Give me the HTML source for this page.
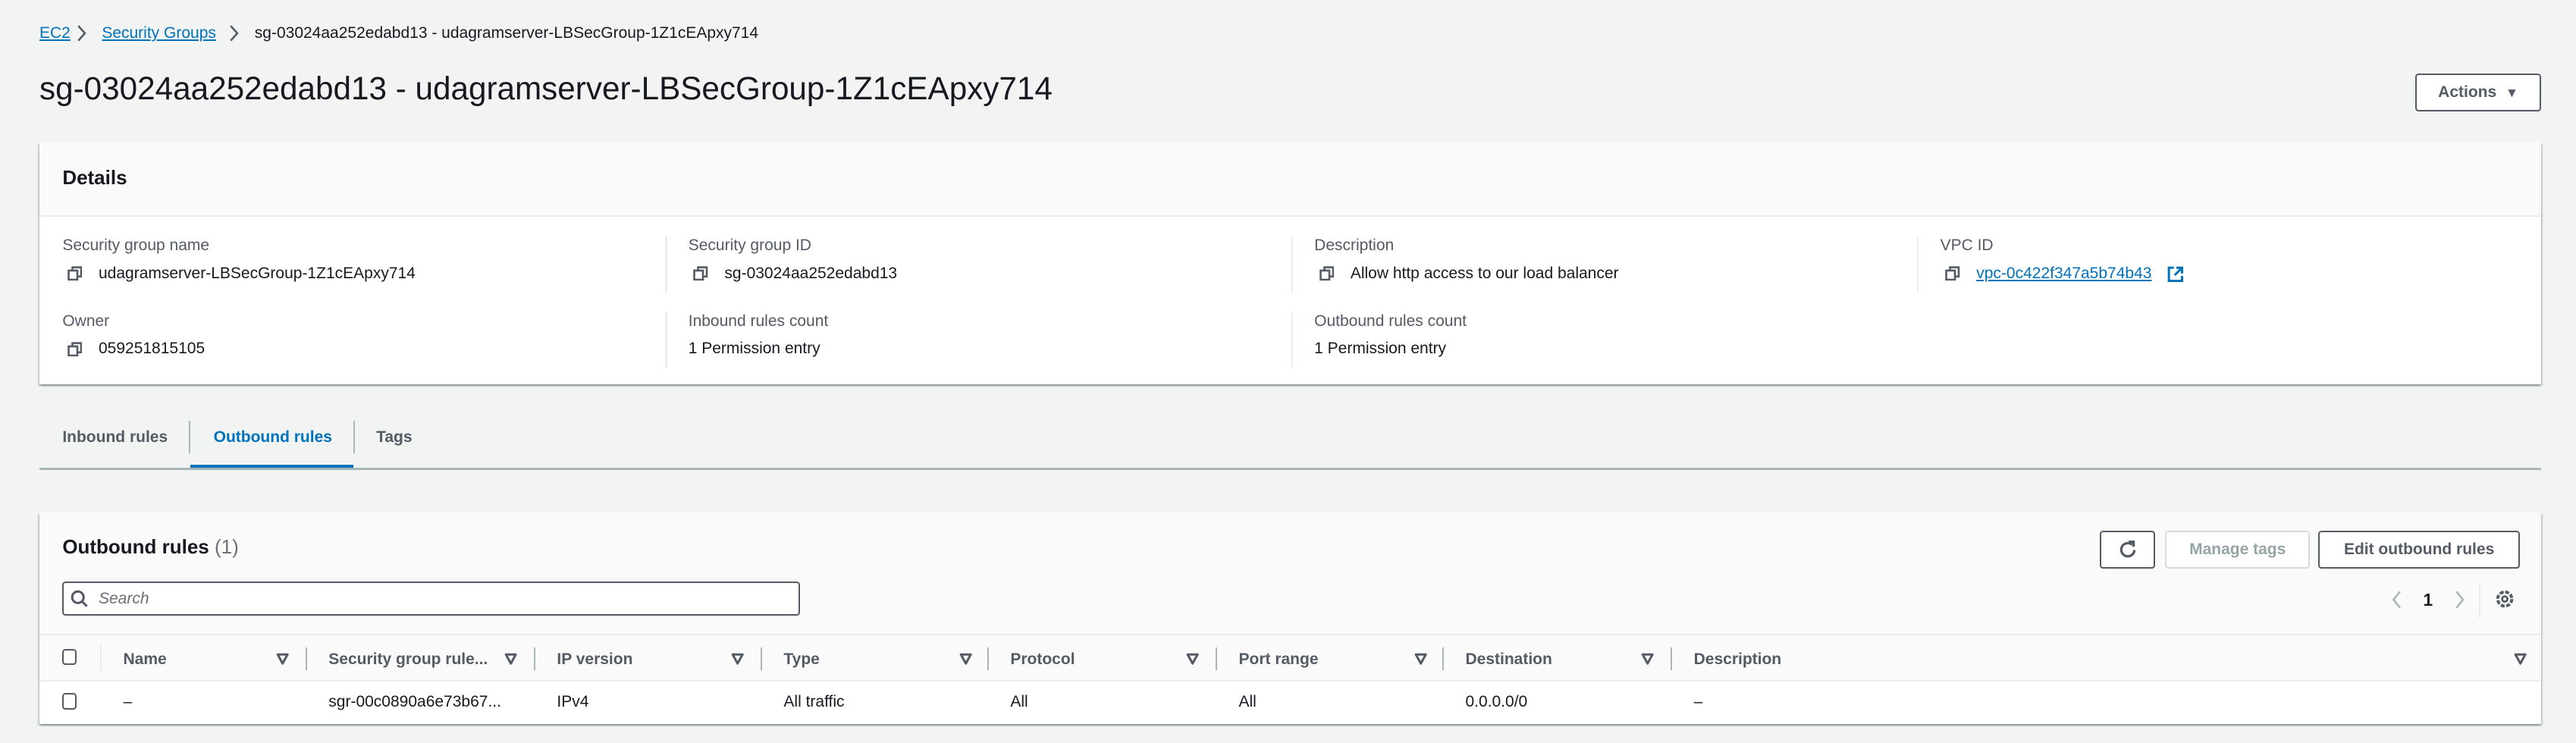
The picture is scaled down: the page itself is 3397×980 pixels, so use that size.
<!DOCTYPE html>
<html><head><meta charset="utf-8">
<style>
html,body{margin:0;padding:0;background:#f2f3f3;overflow:hidden}
body{width:3397px;height:980px}
#w{position:relative;width:1568px;height:452px;zoom:2.16645;font-family:"Liberation Sans",Arial,sans-serif;color:#16191f;font-size:9.7px}
.a{position:absolute;white-space:nowrap}
.lbl{color:#545b64}
.lnk{color:#0073bb;text-decoration:underline}
.box{position:absolute;background:#fff;box-shadow:0 1px 1px rgba(0,28,36,.3),1px 1px 1px rgba(0,28,36,.15),-1px 1px 1px rgba(0,28,36,.15)}
.btn{position:absolute;border:1px solid #545b64;border-radius:2px;background:#fff;font-weight:bold;color:#545b64;display:flex;align-items:center;justify-content:center;box-sizing:border-box}
.vs{position:absolute;width:1px;background:#eaeded}
.th{position:absolute;top:396px;font-weight:bold;color:#545b64}
.tri{position:absolute;top:397px;width:8px;height:8px}
.cs{position:absolute;top:394px;width:1px;height:14px;background:#aab7b8}
.td{position:absolute;top:422px}
.cb{position:absolute;width:7px;height:8px;border:1.3px solid #545b64;border-radius:2px;background:#fff}
.cp{position:absolute;width:9px;height:9px}
</style></head><body><div id="w">
<div class="a lnk" style="left:24px;top:15px">EC2</div>
<svg class="a" style="left:46px;top:15px" width="7" height="11"><path d="M1.5 1l4 4.5-4 4.5" fill="none" stroke="#545b64" stroke-width="1.2"/></svg>
<div class="a lnk" style="left:62px;top:15px">Security Groups</div>
<svg class="a" style="left:139px;top:15px" width="7" height="11"><path d="M1.5 1l4 4.5-4 4.5" fill="none" stroke="#545b64" stroke-width="1.2"/></svg>
<div class="a" style="left:155px;top:15px;color:#16191f">sg-03024aa252edabd13 - udagramserver-LBSecGroup-1Z1cEApxy714</div>
<div class="a" style="left:24px;top:43px;font-size:19.5px">sg-03024aa252edabd13 - udagramserver-LBSecGroup-1Z1cEApxy714</div>
<div class="btn" style="left:1470px;top:45px;width:77px;height:23px">Actions&nbsp;&nbsp;<span style="font-size:8px;color:#545b64">&#9660;</span></div>

<div class="box" style="left:24px;top:87px;width:1523px;height:147px"></div>
<div class="a" style="left:24px;top:87px;width:1523px;height:44px;background:#fafafa;border-bottom:1px solid #eaeded"></div>
<div class="a" style="left:38px;top:101px;font-size:12px;font-weight:bold">Details</div>
<div class="vs" style="left:405px;top:144px;height:34px"></div><div class="vs" style="left:405px;top:190px;height:34px"></div>
<div class="vs" style="left:786px;top:144px;height:34px"></div><div class="vs" style="left:786px;top:190px;height:34px"></div>
<div class="vs" style="left:1167px;top:144px;height:34px"></div>

<div class="a lbl" style="left:38px;top:144px">Security group name</div>
<svg class="a cp" style="left:41px;top:162px" viewBox="0 0 9 9"><rect x="0.7" y="2.7" width="5.3" height="5.6" fill="#fff" stroke="#545b64" stroke-width="1.2"/><path d="M3 2.7V0.7h5.3v5.6H6" fill="none" stroke="#545b64" stroke-width="1.2"/></svg>
<div class="a" style="left:60px;top:161px">udagramserver-LBSecGroup-1Z1cEApxy714</div>
<div class="a lbl" style="left:38px;top:190px">Owner</div>
<svg class="a cp" style="left:41px;top:208px" viewBox="0 0 9 9"><rect x="0.7" y="2.7" width="5.3" height="5.6" fill="#fff" stroke="#545b64" stroke-width="1.2"/><path d="M3 2.7V0.7h5.3v5.6H6" fill="none" stroke="#545b64" stroke-width="1.2"/></svg>
<div class="a" style="left:60px;top:207px">059251815105</div>

<div class="a lbl" style="left:419px;top:144px">Security group ID</div>
<svg class="a cp" style="left:422px;top:162px" viewBox="0 0 9 9"><rect x="0.7" y="2.7" width="5.3" height="5.6" fill="#fff" stroke="#545b64" stroke-width="1.2"/><path d="M3 2.7V0.7h5.3v5.6H6" fill="none" stroke="#545b64" stroke-width="1.2"/></svg>
<div class="a" style="left:441px;top:161px">sg-03024aa252edabd13</div>
<div class="a lbl" style="left:419px;top:190px">Inbound rules count</div>
<div class="a" style="left:419px;top:207px">1 Permission entry</div>

<div class="a lbl" style="left:800px;top:144px">Description</div>
<svg class="a cp" style="left:803px;top:162px" viewBox="0 0 9 9"><rect x="0.7" y="2.7" width="5.3" height="5.6" fill="#fff" stroke="#545b64" stroke-width="1.2"/><path d="M3 2.7V0.7h5.3v5.6H6" fill="none" stroke="#545b64" stroke-width="1.2"/></svg>
<div class="a" style="left:822px;top:161px">Allow http access to our load balancer</div>
<div class="a lbl" style="left:800px;top:190px">Outbound rules count</div>
<div class="a" style="left:800px;top:207px">1 Permission entry</div>

<div class="a lbl" style="left:1181px;top:144px">VPC ID</div>
<svg class="a cp" style="left:1184px;top:162px" viewBox="0 0 9 9"><rect x="0.7" y="2.7" width="5.3" height="5.6" fill="#fff" stroke="#545b64" stroke-width="1.2"/><path d="M3 2.7V0.7h5.3v5.6H6" fill="none" stroke="#545b64" stroke-width="1.2"/></svg>
<div class="a lnk" style="left:1203px;top:161px">vpc-0c422f347a5b74b43</div>
<svg class="a" style="left:1319px;top:162px" width="10" height="10" viewBox="0 0 10 10"><path d="M4 1H1v8h8V6" fill="none" stroke="#0073bb" stroke-width="1.4"/><path d="M5.5 1H9v3.5M9 1L4.5 5.5" fill="none" stroke="#0073bb" stroke-width="1.4"/></svg>

<div class="a" style="left:24px;top:285px;width:1523px;height:1px;background:#aab7b8"></div>
<div class="a" style="left:38px;top:261px;font-weight:bold;color:#545b64">Inbound rules</div>
<div class="a" style="left:115px;top:256px;width:1px;height:20px;background:#aab7b8"></div>
<div class="a" style="left:130px;top:261px;font-weight:bold;color:#0073bb">Outbound rules</div>
<div class="a" style="left:116px;top:283px;width:99px;height:2px;background:#0073bb"></div>
<div class="a" style="left:215px;top:256px;width:1px;height:20px;background:#aab7b8"></div>
<div class="a" style="left:229px;top:261px;font-weight:bold;color:#545b64">Tags</div>

<div class="box" style="left:24px;top:312px;width:1523px;height:129px"></div>
<div class="a" style="left:24px;top:312px;width:1523px;height:102px;background:#fafafa"></div>
<div class="a" style="left:24px;top:386px;width:1523px;height:1px;background:#eaeded"></div>
<div class="a" style="left:24px;top:414px;width:1523px;height:1px;background:#eaeded"></div>
<div class="a" style="left:38px;top:326px;font-size:12px;font-weight:bold">Outbound rules <span style="font-weight:normal;color:#687078">(1)</span></div>
<div class="btn" style="left:1278px;top:323px;width:34px;height:23px"><svg width="12" height="12" viewBox="0 0 12 12"><path d="M10 6.2A4 4 0 1 1 8.6 3" fill="none" stroke="#545b64" stroke-width="1.5"/><path d="M6.5 1.2h3v3" fill="none" stroke="#545b64" stroke-width="1.5"/></svg></div>
<div class="btn" style="left:1318px;top:323px;width:88px;height:23px;border-color:#d5dbdb;color:#95a5a6">Manage tags</div>
<div class="btn" style="left:1411px;top:323px;width:123px;height:23px">Edit outbound rules</div>
<div class="a" style="left:38px;top:354px;width:449px;height:21px;border:1px solid #545b64;border-radius:2px;background:#fff;box-sizing:border-box"></div>
<svg class="a" style="left:43px;top:359px" width="11" height="11" viewBox="0 0 11 11"><circle cx="4.5" cy="4.5" r="3.5" fill="none" stroke="#545b64" stroke-width="1.4"/><path d="M7 7l3 3" stroke="#545b64" stroke-width="1.4"/></svg>
<div class="a" style="left:60px;top:359px;font-style:italic;color:#687078">Search</div>
<svg class="a" style="left:1455px;top:359px" width="8" height="12"><path d="M6 1L2 6l4 5" fill="none" stroke="#aab7b8" stroke-width="1.2"/></svg>
<div class="a" style="left:1475px;top:359px;font-weight:bold;font-size:10.5px">1</div>
<svg class="a" style="left:1493px;top:359px" width="8" height="12"><path d="M2 1l4 5-4 5" fill="none" stroke="#aab7b8" stroke-width="1.2"/></svg>
<div class="a" style="left:1509px;top:356px;width:1px;height:20px;background:#eaeded"></div>
<svg class="a" style="left:1518px;top:358px" width="13" height="13" viewBox="0 0 13 13"><circle cx="6.5" cy="6.5" r="4.3" fill="none" stroke="#545b64" stroke-width="1.8" stroke-dasharray="2.4 1"/><circle cx="6.5" cy="6.5" r="1.6" fill="none" stroke="#545b64" stroke-width="1.3"/></svg>

<div class="cb" style="left:38px;top:395px"></div>
<div class="a" style="left:61px;top:392px;width:1px;height:17px;background:#eaeded"></div>
<svg class="tri" style="left:168px" viewBox="0 0 8 8"><path d="M1 1.5h6L4 7z" fill="none" stroke="#545b64" stroke-width="1.4" stroke-linejoin="round"/></svg>
<svg class="tri" style="left:307px" viewBox="0 0 8 8"><path d="M1 1.5h6L4 7z" fill="none" stroke="#545b64" stroke-width="1.4" stroke-linejoin="round"/></svg>
<svg class="tri" style="left:445px" viewBox="0 0 8 8"><path d="M1 1.5h6L4 7z" fill="none" stroke="#545b64" stroke-width="1.4" stroke-linejoin="round"/></svg>
<svg class="tri" style="left:584px" viewBox="0 0 8 8"><path d="M1 1.5h6L4 7z" fill="none" stroke="#545b64" stroke-width="1.4" stroke-linejoin="round"/></svg>
<svg class="tri" style="left:722px" viewBox="0 0 8 8"><path d="M1 1.5h6L4 7z" fill="none" stroke="#545b64" stroke-width="1.4" stroke-linejoin="round"/></svg>
<svg class="tri" style="left:861px" viewBox="0 0 8 8"><path d="M1 1.5h6L4 7z" fill="none" stroke="#545b64" stroke-width="1.4" stroke-linejoin="round"/></svg>
<svg class="tri" style="left:999px" viewBox="0 0 8 8"><path d="M1 1.5h6L4 7z" fill="none" stroke="#545b64" stroke-width="1.4" stroke-linejoin="round"/></svg>
<svg class="tri" style="left:1530px" viewBox="0 0 8 8"><path d="M1 1.5h6L4 7z" fill="none" stroke="#545b64" stroke-width="1.4" stroke-linejoin="round"/></svg>
<div class="th" style="left:75px">Name</div><div class="cs" style="left:186px"></div>
<div class="th" style="left:200px">Security group rule...</div><div class="cs" style="left:325px"></div>
<div class="th" style="left:339px">IP version</div><div class="cs" style="left:463px"></div>
<div class="th" style="left:477px">Type</div><div class="cs" style="left:601px"></div>
<div class="th" style="left:615px">Protocol</div><div class="cs" style="left:740px"></div>
<div class="th" style="left:754px">Port range</div><div class="cs" style="left:878px"></div>
<div class="th" style="left:892px">Destination</div><div class="cs" style="left:1017px"></div>
<div class="th" style="left:1031px">Description</div>

<div class="cb" style="left:38px;top:422px"></div>
<div class="td" style="left:75px">–</div>
<div class="td" style="left:200px">sgr-00c0890a6e73b67...</div>
<div class="td" style="left:339px">IPv4</div>
<div class="td" style="left:477px">All traffic</div>
<div class="td" style="left:615px">All</div>
<div class="td" style="left:754px">All</div>
<div class="td" style="left:892px">0.0.0.0/0</div>
<div class="td" style="left:1031px">–</div>
</div></body></html>
